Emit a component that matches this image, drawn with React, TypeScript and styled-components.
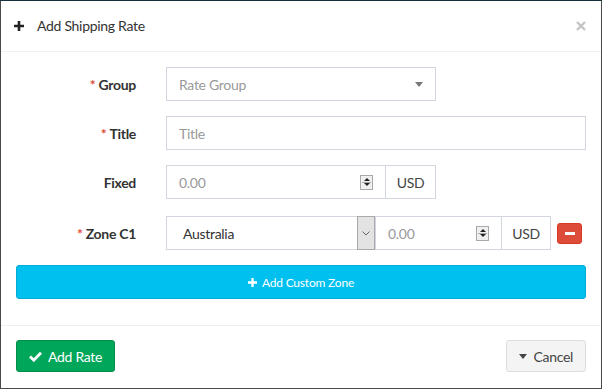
import styled, { createGlobalStyle } from 'styled-components';

const GlobalStyle = createGlobalStyle`
  html, body {
    margin: 0;
    padding: 0;
    background: #4a4a4a;
  }
  body {
    font-family: Lato, "Noto Sans", sans-serif;
    font-size: 14px;
    letter-spacing: -0.3px;
    color: #333;
  }
  * { box-sizing: border-box; }
`;

const Backdrop = styled.div`
  width: 602px;
  height: 389px;
  border-top: 1px solid #17313c;
  padding: 0 1px 1px 1px;
  background: #4a4a4a;
`;

const Modal = styled.div`
  background: #fff;
  height: 100%;
  display: flex;
  flex-direction: column;
`;

const Header = styled.div`
  height: 51px;
  padding: 15px 15px 15px 13px;
  border-bottom: 1px solid #f0f0f0;
  display: flex;
  align-items: center;
  gap: 13px;
`;

const Title = styled.h4`
  margin: 0;
  font-size: 14px;
  font-weight: 400;
  color: #333;
  flex: 1;
  line-height: 20px;
`;

const CloseIcon = () => (
  <svg width="10" height="10" viewBox="0 0 10 10">
    <path d="M1 1L9 9M9 1L1 9" stroke="#c4c4c4" strokeWidth="2.4" />
  </svg>
);

const Body = styled.div`
  padding: 15px 15px 26px;
  display: flex;
  flex-direction: column;
  border-bottom: 1px solid #f0f0f0;
`;

const Row = styled.div<{ $gap?: number }>`
  display: grid;
  grid-template-columns: 120px 420px;
  column-gap: 30px;
  align-items: center;
  margin-bottom: ${({ $gap }) => $gap ?? 15}px;
`;

const Label = styled.label`
  text-align: right;
  font-weight: 700;
  color: #333;
`;

const Star = styled.span`
  color: #dd4b39;
  margin-right: 3px;
`;

const Box = styled.div<{ $w?: number }>`
  height: 34px;
  width: ${({ $w }) => ($w ? `${$w}px` : '100%')};
  border: 1px solid #d2d6de;
  display: flex;
  align-items: center;
  padding: 0 12px;
  color: #333;
  background: #fff;
`;

const Placeholder = styled.span`
  flex: 1;
  color: #999;
`;

const Value = styled.span`
  flex: 1;
  align-self: center;
  color: #333;
  padding-left: 4px;
`;

const Caret = styled.span<{ $color?: string }>`
  width: 0;
  height: 0;
  border-left: 4px solid transparent;
  border-right: 4px solid transparent;
  border-top: 5px solid ${({ $color }) => $color ?? '#777'};
`;

const Group = styled.div`
  display: flex;
  align-items: center;
`;

const Addon = styled.div<{ $w: number }>`
  height: 34px;
  width: ${({ $w }) => $w}px;
  border: 1px solid #d2d6de;
  border-left: none;
  display: flex;
  align-items: center;
  justify-content: center;
  color: #444;
`;

const Spinner = styled.span`
  width: 13px;
  height: 15px;
  border: 1px solid #a9a9a9;
  background: #f0f0f0;
  display: flex;
  flex-direction: column;
  align-items: center;
  justify-content: space-around;
  padding: 2px 0;
  position: relative;
  &::after {
    content: '';
    position: absolute;
    left: 1px;
    right: 1px;
    top: 6px;
    height: 1px;
    background: #a9a9a9;
  }
`;

const Tri = styled.span<{ $up?: boolean }>`
  width: 0;
  height: 0;
  border-left: 3px solid transparent;
  border-right: 3px solid transparent;
  ${({ $up }) => ($up ? 'border-bottom: 3px solid #222;' : 'border-top: 3px solid #222;')}
`;

const SelectBox = styled.div`
  height: 34px;
  width: 210px;
  border: 1px solid #d2d6de;
  display: flex;
  align-items: stretch;
  padding-left: 12px;
`;

const DropBtn = styled.span`
  width: 18px;
  margin: -1px 0;
  border: 1px solid #a9a9a9;
  background: #e3e3e3;
  display: flex;
  align-items: center;
  justify-content: center;
`;

const NumBox = styled.div`
  height: 34px;
  width: 126px;
  border: 1px solid #d2d6de;
  border-left: none;
  display: flex;
  align-items: center;
  padding: 0 12px;
`;

const RemoveBtn = styled.button`
  width: 25px;
  height: 21px;
  margin-left: 6px;
  border: 1px solid #d73925;
  border-radius: 3px;
  background: #dd4b39;
  display: flex;
  align-items: center;
  justify-content: center;
  padding: 0;
  &::before {
    content: '';
    width: 10px;
    height: 3px;
    background: #fff;
  }
`;

const InfoBtn = styled.button`
  height: 34px;
  width: 100%;
  border: 1px solid #00acd6;
  border-radius: 3px;
  background: #00c0ef;
  color: #fff;
  font-family: inherit;
  font-size: 12px;
  letter-spacing: -0.2px;
  display: flex;
  align-items: center;
  justify-content: center;
  gap: 5px;
`;

const Footer = styled.div`
  flex: 1;
  padding: 14px 15px;
  display: flex;
  justify-content: space-between;
  align-items: flex-start;
`;

const Btn = styled.button<{ $variant: 'success' | 'default' }>`
  height: 32px;
  padding: 0 12px;
  border-radius: 3px;
  font-family: inherit;
  font-size: 14px;
  letter-spacing: -0.3px;
  display: flex;
  align-items: center;
  gap: 6px;
  border: 1px solid ${({ $variant }) => ($variant === 'success' ? '#008d4c' : '#ddd')};
  background: ${({ $variant }) => ($variant === 'success' ? '#00a65a' : '#f4f4f4')};
  color: ${({ $variant }) => ($variant === 'success' ? '#fff' : '#444')};
`;

const PlusIcon = ({ size, color }: { size: number; color: string }) => (
  <svg width={size} height={size} viewBox="0 0 10 10">
    <path d="M3.7 0h2.6v3.7H10v2.6H6.3V10H3.7V6.3H0V3.7h3.7z" fill={color} />
  </svg>
);

const Chevron = () => (
  <svg width="8" height="5" viewBox="0 0 8 5">
    <path d="M0.5 0.5L4 4L7.5 0.5" fill="none" stroke="#666" strokeWidth="1" />
  </svg>
);

const CheckIcon = () => (
  <svg width="13" height="11" viewBox="0 0 13 11">
    <path d="M1 5.5L4.8 9.2L12 1.8" fill="none" stroke="#fff" strokeWidth="2.8" />
  </svg>
);

const NumberSpin = () => (
  <Spinner>
    <Tri $up />
    <Tri />
  </Spinner>
);

export default function App() {
  return (
    <>
      <GlobalStyle />
      <Backdrop>
        <Modal>
          <Header>
            <PlusIcon size={10} color="#222" />
            <Title>Add Shipping Rate</Title>
            <CloseIcon />
          </Header>
          <Body>
            <Row>
              <Label><Star>*</Star>Group</Label>
              <Box $w={270}>
                <Placeholder>Rate Group</Placeholder>
                <Caret />
              </Box>
            </Row>
            <Row>
              <Label><Star>*</Star>Title</Label>
              <Box>
                <Placeholder>Title</Placeholder>
              </Box>
            </Row>
            <Row $gap={17}>
              <Label>Fixed</Label>
              <Group>
                <Box $w={220}>
                  <Placeholder>0.00</Placeholder>
                  <NumberSpin />
                </Box>
                <Addon $w={50}>USD</Addon>
              </Group>
            </Row>
            <Row>
              <Label><Star>*</Star>Zone C1</Label>
              <Group>
                <SelectBox>
                  <Value>Australia</Value>
                  <DropBtn><Chevron /></DropBtn>
                </SelectBox>
                <NumBox>
                  <Placeholder>0.00</Placeholder>
                  <NumberSpin />
                </NumBox>
                <Addon $w={49}>USD</Addon>
                <RemoveBtn aria-label="Remove zone" />
              </Group>
            </Row>
            <InfoBtn>
              <PlusIcon size={9} color="#fff" />
              Add Custom Zone
            </InfoBtn>
          </Body>
          <Footer>
            <Btn $variant="success">
              <CheckIcon />
              Add Rate
            </Btn>
            <Btn $variant="default">
              <Caret $color="#444" />
              Cancel
            </Btn>
          </Footer>
        </Modal>
      </Backdrop>
    </>
  );
}
